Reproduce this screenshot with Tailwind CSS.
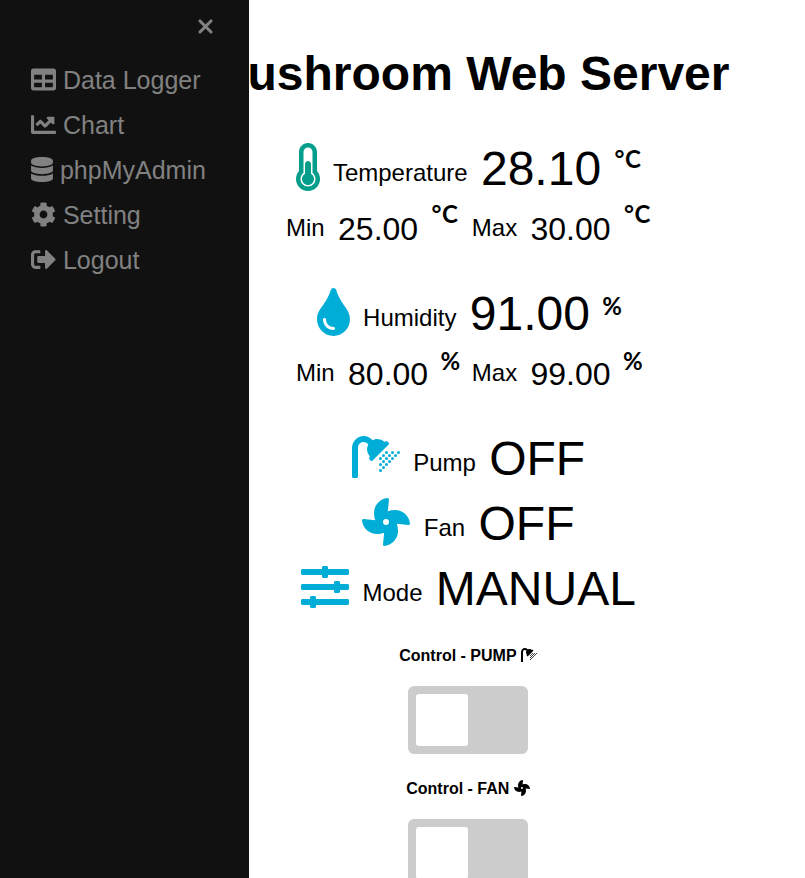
<!DOCTYPE html>
<html lang="en">
<head>
<meta charset="utf-8">
<title>Mushroom Web Server</title>
<script src="https://cdn.jsdelivr.net/npm/@tailwindcss/browser@4"></script>
</head>
<body class="h-screen overflow-hidden bg-white text-black font-['Liberation_Sans',Arial,sans-serif]">
<svg class="hidden">
<symbol id="shower" viewBox="0 0 512 512"><path d="M304,320a16,16,0,1,0,16,16A16,16,0,0,0,304,320Zm32-96a16,16,0,1,0,16,16A16,16,0,0,0,336,224Zm32,64a16,16,0,1,0-16-16A16,16,0,0,0,368,288Zm-32,32a16,16,0,1,0-16-16A16,16,0,0,0,336,320Zm-32-64a16,16,0,1,0,16,16A16,16,0,0,0,304,256Zm128-32a16,16,0,1,0-16-16A16,16,0,0,0,432,224Zm-48,16a16,16,0,1,0,16-16A16,16,0,0,0,384,240Zm-16-48a16,16,0,1,0,16,16A16,16,0,0,0,368,192Zm96,32a16,16,0,1,0,16,16A16,16,0,0,0,464,224Zm32-32a16,16,0,1,0,16,16A16,16,0,0,0,496,192Zm-64,64a16,16,0,1,0,16,16A16,16,0,0,0,432,256Zm-32,32a16,16,0,1,0,16,16A16,16,0,0,0,400,288Zm-64,64a16,16,0,1,0,16,16A16,16,0,0,0,336,352Zm-32,32a16,16,0,1,0,16,16A16,16,0,0,0,304,384Zm64-64a16,16,0,1,0,16,16A16,16,0,0,0,368,320Zm21.65-218.35-11.3-11.31a16,16,0,0,0-22.63,0L350.05,96A111.19,111.19,0,0,0,272,64c-19.24,0-37.08,5.3-52.9,13.85l-10-10A121.72,121.72,0,0,0,123.44,32C55.49,31.5,0,92.91,0,160.85V464a16,16,0,0,0,16,16H48a16,16,0,0,0,16-16V158.4c0-30.15,21-58.2,51-61.93a58.38,58.38,0,0,1,48.93,16.67l10,10C165.3,138.92,160,156.76,160,176a111.23,111.23,0,0,0,32,78.05l-5.66,5.67a16,16,0,0,0,0,22.62l11.3,11.31a16,16,0,0,0,22.63,0L389.65,124.28A16,16,0,0,0,389.65,101.65Z"/></symbol>
<symbol id="fan" viewBox="0 0 512 512"><path d="M352.57 128c-28.09 0-54.09 4.52-77.06 12.86l12.41-123.11C289 7.31 279.81-1.18 269.33.13 189.63 10.13 128 77.64 128 159.43c0 28.09 4.52 54.09 12.86 77.06L17.75 224.08C7.31 223-1.18 232.19.13 242.67c10 79.7 77.51 141.33 159.3 141.33 28.09 0 54.09-4.52 77.06-12.86l-12.41 123.11c-1.05 10.43 8.11 18.93 18.59 17.62 79.7-10 141.33-77.51 141.33-159.3 0-28.09-4.52-54.09-12.86-77.06l123.11 12.41c10.44 1.05 18.93-8.11 17.62-18.59-10-79.7-77.51-141.33-159.3-141.33zM256 288a32 32 0 1 1 32-32 32 32 0 0 1-32 32z"/></symbol>
</svg>

<nav class="fixed inset-y-0 left-0 z-10 w-[249px] bg-[#111] text-[#818181] text-[25px] leading-[45px]">
  <div class="h-[58px] pl-[198px] pt-[19px]">
    <svg class="block h-[15px] w-[15px]" viewBox="0 0 15 15" fill="none" stroke="currentColor" stroke-width="3.1" stroke-linecap="round"><path d="M2 2 13 13M13 2 2 13"/></svg>
  </div>
  <a class="block h-[45px] pl-[31px] whitespace-nowrap"><svg class="inline-block h-[25px] w-[25px] align-[-3px]" viewBox="0 0 512 512" fill="currentColor"><path d="M464 32H48C21.49 32 0 53.49 0 80v352c0 26.51 21.49 48 48 48h416c26.51 0 48-21.49 48-48V80c0-26.51-21.49-48-48-48zM224 416H64v-96h160v96zm0-160H64v-96h160v96zm224 160H288v-96h160v96zm0-160H288v-96h160v96z"/></svg> Data Logger</a>
  <a class="block h-[45px] pl-[31px] whitespace-nowrap"><svg class="inline-block h-[25px] w-[25px] align-[-3px]" viewBox="0 0 512 512" fill="currentColor"><path d="M496 384H64V80c0-8.84-7.16-16-16-16H16C7.16 64 0 71.16 0 80v336c0 17.67 14.33 32 32 32h464c8.84 0 16-7.16 16-16v-32c0-8.84-7.16-16-16-16zM464 96H345.94c-21.38 0-32.09 25.85-16.97 40.97l32.4 32.4L288 242.75l-73.37-73.37c-12.5-12.5-32.76-12.5-45.25 0l-68.69 68.69c-6.25 6.25-6.25 16.38 0 22.63l22.62 22.62c6.25 6.25 16.38 6.25 22.63 0L192 237.25l73.37 73.37c12.5 12.5 32.76 12.5 45.25 0l96-96 32.4 32.4c15.12 15.12 40.97 4.41 40.97-16.97V112c.01-8.84-7.15-16-15.99-16z"/></svg> Chart</a>
  <a class="block h-[45px] pl-[31px] whitespace-nowrap"><svg class="inline-block h-[25px] w-[22px] align-[-3px]" viewBox="0 0 448 512" fill="currentColor"><path d="M448 73.143v45.714C448 159.143 347.667 192 224 192S0 159.143 0 118.857V73.143C0 32.857 100.333 0 224 0s224 32.857 224 73.143zM448 176v102.857C448 319.143 347.667 352 224 352S0 319.143 0 278.857V176c48.125 33.143 136.208 48.572 224 48.572S399.874 209.143 448 176zm0 160v102.857C448 479.143 347.667 512 224 512S0 479.143 0 438.857V336c48.125 33.143 136.208 48.572 224 48.572S399.874 369.143 448 336z"/></svg> phpMyAdmin</a>
  <a class="block h-[45px] pl-[31px] whitespace-nowrap"><svg class="inline-block h-[25px] w-[25px] align-[-3px]" viewBox="0 0 512 512" fill="currentColor"><path d="M487.4 315.7l-42.6-24.6c4.3-23.2 4.3-47 0-70.2l42.6-24.6c4.9-2.8 7.1-8.6 5.5-14-11.1-35.6-30-67.8-54.7-94.6-3.8-4.1-10-5.1-14.8-2.3L380.8 110c-17.9-15.4-38.5-27.3-60.8-35.1V25.8c0-5.6-3.9-10.5-9.4-11.7-36.7-8.2-74.3-7.8-109.2 0-5.5 1.2-9.4 6.1-9.4 11.7V75c-22.2 7.9-42.8 19.8-60.8 35.1L88.7 85.5c-4.9-2.8-11-1.9-14.8 2.3-24.7 26.7-43.6 58.9-54.7 94.6-1.7 5.4.6 11.2 5.5 14L67.3 221c-4.3 23.2-4.3 47 0 70.2l-42.6 24.6c-4.9 2.8-7.1 8.6-5.5 14 11.1 35.6 30 67.8 54.7 94.6 3.8 4.1 10 5.1 14.8 2.3l42.6-24.6c17.9 15.4 38.5 27.3 60.8 35.1v49.2c0 5.6 3.9 10.5 9.4 11.7 36.7 8.2 74.3 7.8 109.2 0 5.5-1.2 9.4-6.1 9.4-11.7v-49.2c22.2-7.9 42.8-19.8 60.8-35.1l42.6 24.6c4.9 2.8 11 1.9 14.8-2.3 24.7-26.7 43.6-58.9 54.7-94.6 1.5-5.5-.7-11.3-5.6-14.1zM256 336c-44.1 0-80-35.9-80-80s35.9-80 80-80 80 35.9 80 80-35.9 80-80 80z"/></svg> Setting</a>
  <a class="block h-[45px] pl-[31px] whitespace-nowrap"><svg class="inline-block h-[25px] w-[25px] align-[-3px]" viewBox="0 0 512 512" fill="currentColor"><path d="M497 273L329 441c-15 15-41 4.5-41-17v-96H152c-13.3 0-24-10.7-24-24v-96c0-13.3 10.7-24 24-24h136V88c0-21.4 25.9-32 41-17l168 168c9.3 9.4 9.3 24.6 0 34zM192 436v-40c0-6.6-5.4-12-12-12H96c-17.7 0-32-14.3-32-32V160c0-17.7 14.3-32 32-32h84c6.6 0 12-5.4 12-12V76c0-6.6-5.4-12-12-12H96c-53 0-96 43-96 96v192c0 53 43 96 96 96h84c6.6 0 12-5.4 12-12z"/></svg> Logout</a>
</nav>

<main class="ml-[168px] w-[601px] text-center whitespace-nowrap">
  <h1 class="pt-[46px] text-[48px] font-bold leading-[55px]">Mushroom Web Server</h1>

  <section class="mt-10 text-[48px] leading-[55px]">
    <p class="h-[55px]"><svg class="inline-block h-[48px] w-[24px] align-[-6px] text-[#059e8a]" viewBox="0 0 256 512" fill="currentColor"><path d="M192 384c0 35.346-28.654 64-64 64s-64-28.654-64-64c0-23.685 12.876-44.349 32-55.417V224c0-17.673 14.327-32 32-32s32 14.327 32 32v104.583c19.124 11.068 32 31.732 32 55.417zm32-84.653c19.912 22.563 32 52.194 32 84.653 0 70.696-57.303 128-128 128-.299 0-.609-.001-.909-.003C56.789 511.509-.357 453.636.002 383.333.158 351.135 12.21 321.75 32 299.347V96c0-53.019 42.981-96 96-96s96 42.981 96 96v203.347zM208 384c0-34.339-19.37-52.19-32-66.502V96c0-26.467-21.533-48-48-48S80 69.533 80 96v221.498c-12.732 14.428-31.825 32.1-31.999 66.08-.224 43.876 35.563 80.116 79.423 80.42L128 464c44.112 0 80-35.888 80-80z"/></svg> <span class="align-[4px] text-[24px] leading-none">Temperature</span> <span>28.10</span> <sup class="inline-block w-[27px] text-left align-[17px] top-0 font-['Lato'] font-bold text-[24px] leading-none tracking-[0.5px]">°C</sup></p>
    <p class="h-[55px]"><span class="align-[4px] text-[24px] leading-none">Min</span> <span class="text-[32px] leading-none">25.00</span> <sup class="inline-block w-[27px] text-left align-[17px] top-0 font-['Lato'] font-bold text-[24px] leading-none tracking-[0.5px]">°C</sup> <span class="align-[4px] text-[24px] leading-none">Max</span> <span class="text-[32px] leading-none">30.00</span> <sup class="inline-block w-[27px] text-left align-[17px] top-0 font-['Lato'] font-bold text-[24px] leading-none tracking-[0.5px]">°C</sup></p>
  </section>

  <section class="mt-[35px] text-[48px] leading-[55px]">
    <p class="h-[55px]"><svg class="inline-block h-[48px] w-[33px] align-[-6px] text-[#00add6]" viewBox="0 0 352 512" fill="currentColor"><path d="M205.22 22.09c-7.94-28.78-49.44-30.12-58.44 0C100.01 179.85 0 222.72 0 333.91 0 432.35 78.72 512 176 512s176-79.65 176-178.09c0-111.75-99.79-153.34-146.78-311.82zM176 448c-61.75 0-112-50.25-112-112 0-8.84 7.16-16 16-16s16 7.16 16 16c0 44.11 35.89 80 80 80 8.84 0 16 7.16 16 16s-7.16 16-16 16z"/></svg> <span class="align-[4px] text-[24px] leading-none">Humidity</span> <span>91.00</span> <sup class="inline-block w-[17px] text-left align-[15px] top-0 font-['Lato'] font-bold text-[24px] leading-none"><span class="-ml-px">%</span></sup></p>
    <p class="h-[55px]"><span class="align-[4px] text-[24px] leading-none">Min</span> <span class="text-[32px] leading-none">80.00</span> <sup class="inline-block w-[17px] text-left align-[15px] top-0 font-['Lato'] font-bold text-[24px] leading-none"><span class="-ml-px">%</span></sup> <span class="align-[4px] text-[24px] leading-none">Max</span> <span class="text-[32px] leading-none">99.00</span> <sup class="inline-block w-[17px] text-left align-[15px] top-0 font-['Lato'] font-bold text-[24px] leading-none"><span class="-ml-px">%</span></sup></p>
  </section>

  <section class="mt-[30px] text-[48px] leading-[65px]">
    <p class="h-[65px]"><svg class="inline-block h-[48px] w-[48px] align-[-6px] text-[#00add6]" fill="currentColor"><use href="#shower"/></svg> <span class="align-[4px] text-[24px] leading-none">Pump</span> <span>OFF</span></p>
    <p class="h-[65px]"><svg class="inline-block h-[48px] w-[48px] align-[-6px] text-[#00add6]" fill="currentColor"><use href="#fan"/></svg> <span class="align-[4px] text-[24px] leading-none">Fan</span> <span>OFF</span></p>
    <p class="h-[65px]"><svg class="inline-block h-[48px] w-[48px] align-[-6px] text-[#00add6]" viewBox="0 0 512 512" fill="currentColor"><path d="M496 384H160v-16c0-8.8-7.2-16-16-16h-32c-8.8 0-16 7.2-16 16v16H16c-8.8 0-16 7.2-16 16v32c0 8.8 7.2 16 16 16h80v16c0 8.8 7.2 16 16 16h32c8.8 0 16-7.2 16-16v-16h336c8.8 0 16-7.2 16-16v-32c0-8.8-7.2-16-16-16zm0-160h-80v-16c0-8.8-7.2-16-16-16h-32c-8.8 0-16 7.2-16 16v16H16c-8.8 0-16 7.2-16 16v32c0 8.8 7.2 16 16 16h336v16c0 8.8 7.2 16 16 16h32c8.8 0 16-7.2 16-16v-16h80c8.8 0 16-7.2 16-16v-32c0-8.8-7.2-16-16-16zm0-160H288V48c0-8.8-7.2-16-16-16h-32c-8.8 0-16 7.2-16 16v16H16C7.2 64 0 71.2 0 80v32c0 8.8 7.2 16 16 16h208v16c0 8.8 7.2 16 16 16h32c8.8 0 16-7.2 16-16v-16h208c8.8 0 16-7.2 16-16V80c0-8.8-7.2-16-16-16z"/></svg> <span class="align-[4px] text-[24px] leading-none">Mode</span> <span>MANUAL</span></p>
  </section>

  <section class="mt-[26px] w-[600px]">
    <h4 class="h-[18px] text-[16px] font-bold leading-[18px]">Control - PUMP <svg class="inline-block h-[16px] w-[16px] align-[-2px]"><use href="#shower"/></svg></h4>
    <div class="mx-auto mt-[21px] h-[68px] w-[120px] rounded-md bg-[#ccc] p-2"><div class="h-[52px] w-[52px] rounded-[3px] bg-white"></div></div>
    <h4 class="mt-[26px] h-[18px] text-[16px] font-bold leading-[18px]">Control - FAN <svg class="inline-block h-[16px] w-[16px] align-[-2px]"><use href="#fan"/></svg></h4>
    <div class="mx-auto mt-[21px] h-[68px] w-[120px] rounded-md bg-[#ccc] p-2"><div class="h-[52px] w-[52px] rounded-[3px] bg-white"></div></div>
  </section>
</main>
</body>
</html>
